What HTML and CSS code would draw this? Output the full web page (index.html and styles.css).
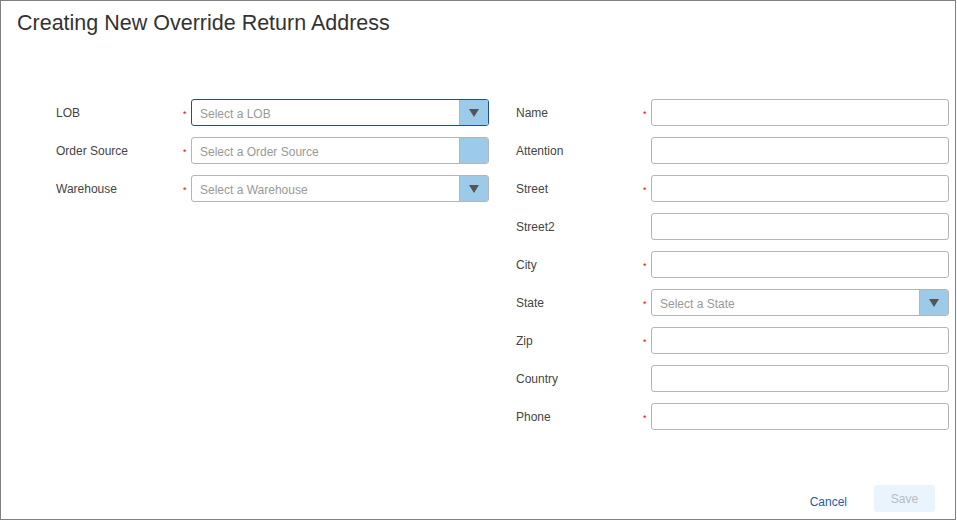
FILE: index.html
```html
<!DOCTYPE html>
<html>
<head>
<meta charset="utf-8">
<link rel="stylesheet" href="styles.css">
</head>
<body>
<div class="dialog">
  <h1 class="title">Creating New Override Return Address</h1>
  <div class="form">
    <div class="col">
      <label class="lbl">LOB</label><span class="star">*</span>
      <div class="select focus"><span class="ph">Select a LOB</span><span class="btn"><span class="tri"></span></span></div>
      <label class="lbl">Order Source</label><span class="star">*</span>
      <div class="select"><span class="ph">Select a Order Source</span><span class="btn"></span></div>
      <label class="lbl">Warehouse</label><span class="star">*</span>
      <div class="select"><span class="ph">Select a Warehouse</span><span class="btn"><span class="tri"></span></span></div>
    </div>
    <div class="col">
      <label class="lbl">Name</label><span class="star">*</span><div class="input"></div>
      <label class="lbl">Attention</label><span class="star"></span><div class="input"></div>
      <label class="lbl">Street</label><span class="star">*</span><div class="input"></div>
      <label class="lbl">Street2</label><span class="star"></span><div class="input"></div>
      <label class="lbl">City</label><span class="star">*</span><div class="input"></div>
      <label class="lbl">State</label><span class="star">*</span>
      <div class="select"><span class="ph">Select a State</span><span class="btn"><span class="tri"></span></span></div>
      <label class="lbl">Zip</label><span class="star">*</span><div class="input"></div>
      <label class="lbl">Country</label><span class="star"></span><div class="input"></div>
      <label class="lbl">Phone</label><span class="star">*</span><div class="input"></div>
    </div>
  </div>
  <div class="footer">
    <a class="cancel">Cancel</a>
    <button class="save">Save</button>
  </div>
</div>
</body>
</html>
```
FILE: styles.css
```css
html, body { margin: 0; padding: 0; background: #fff; }
body { font-family: "Liberation Sans", Arial, sans-serif; color: #333; }
.dialog {
  width: 956px; height: 520px; box-sizing: border-box;
  border: 1px solid #808080;
  display: flex; flex-direction: column;
}
.title {
  margin: 0; padding: 10px 0 0 16px;
  font-size: 21.5px; font-weight: normal; color: #333; line-height: 24px;
}
.form {
  display: flex; gap: 27px;
  padding: 64px 0 0 55px;
}
.col {
  display: grid;
  grid-template-columns: 127px 8px 298px;
  grid-auto-rows: 27px;
  row-gap: 11px;
  align-items: center;
}
.lbl { font-size: 12px; color: #444; padding-top: 1px; }
.star { color: #e00; font-size: 9px; line-height: 9px; padding-top: 3px; }
.input, .select {
  height: 27px; box-sizing: border-box;
  border: 1px solid #b5b5b5; border-radius: 3px; background: #fff;
}
.select { display: flex; align-items: center; overflow: hidden; }
.select.focus { border-color: #1d4f91; }
.ph { flex: 1; font-size: 12px; color: #999; padding-left: 8px; padding-top: 3px; }
.btn {
  width: 30px; height: 27px; margin: -1px -1px -1px 0;
  background: #9ccbea; border: 1px solid #b0b8c0; box-sizing: border-box;
  border-radius: 0 3px 3px 0;
  display: flex; align-items: center; justify-content: center;
}
.tri {
  width: 0; height: 0;
  border-left: 5px solid transparent; border-right: 5px solid transparent;
  border-top: 8px solid #555;
  margin-top: 1px;
}
.footer {
  margin-top: auto;
  display: flex; align-items: center; justify-content: flex-end;
  gap: 27px;
  padding: 0 20px 7px 0;
}
.cancel { font-size: 12px; color: #1f5aa6; margin-top: 6px; }
.save {
  width: 61px; height: 27px; border: none; border-radius: 3px;
  background: #eaf4fd; color: #b8bcc0; font-size: 12px;
  font-family: "Liberation Sans", Arial, sans-serif;
}
```
